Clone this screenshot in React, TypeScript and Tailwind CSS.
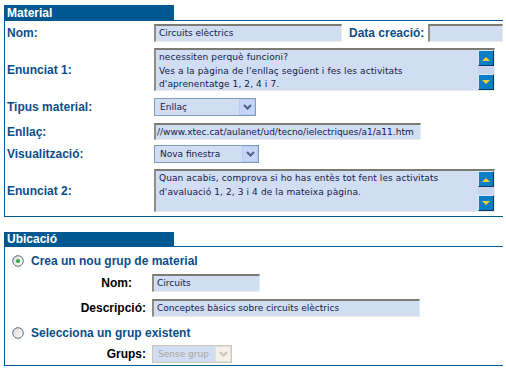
import React from "react";

const LBL = "font-['Liberation_Sans',Arial,sans-serif] font-bold text-[12px] text-[#0b4e8a] whitespace-nowrap";
const LBLK = "font-['Liberation_Sans',Arial,sans-serif] font-bold text-[12px] text-black whitespace-nowrap";
const TXT = "font-['DejaVu_Sans',Verdana,sans-serif] text-[9px] text-[#13204a] whitespace-nowrap overflow-hidden";
const INSET =
  "bg-[#d1ddf3] border-t-2 border-l-2 border-r border-b border-t-[#7b7b73] border-l-[#8e8e86] border-r-[#ecebe4] border-b-[#ecebe4] shrink-0";

function Chevron({ color }: { color: string }) {
  return (
    <svg width="9" height="6" viewBox="0 0 9 6">
      <polyline points="1,1 4.5,4.5 8,1" fill="none" stroke={color} strokeWidth="2" />
    </svg>
  );
}

function SelectBox({ text, wClass, disabled }: { text: string; wClass: string; disabled?: boolean }) {
  return (
    <div
      className={`${wClass} h-[18px] shrink-0 flex border ${
        disabled ? "border-[#c9c7ba]" : "border-[#7f9db9]"
      } bg-[#d1ddf3]`}
    >
      <div
        className={`flex-1 pl-[5px] leading-[16px] ${TXT} ${disabled ? "!text-[#aca899]" : ""}`}
      >
        {text}
      </div>
      <div
        className={`w-[16px] h-[16px] flex items-center justify-center border ${
          disabled ? "bg-[#f2f1ea] border-[#e4e3da]" : "bg-[#c6d5f7] border-[#b9cbf3]"
        }`}
      >
        <Chevron color={disabled ? "#c9c7ba" : "#4d6185"} />
      </div>
    </div>
  );
}

function ScrollBtn({ up }: { up?: boolean }) {
  return (
    <div className="w-[16px] h-[16px] bg-[#0a7ec6] border border-t-[#d8e8f5] border-l-[#d8e8f5] border-r-[#0b3a66] border-b-[#0b3a66] flex items-center justify-center">
      <svg width="8" height="5" viewBox="0 0 8 5">
        {up ? (
          <polygon points="0,5 4,1 8,5" fill="#ffcc33" />
        ) : (
          <polygon points="0,0 8,0 4,4" fill="#ffcc33" />
        )}
      </svg>
    </div>
  );
}

function TextArea({ lines }: { lines: string[] }) {
  return (
    <div className={`w-[341px] h-[43px] flex ${INSET}`}>
      <div className={`flex-1 pl-[3px] pt-[1px] leading-[13.5px] tracking-[0.1px] ${TXT}`}>
        {lines.map((l, i) => (
          <div key={i}>{l}</div>
        ))}
      </div>
      <div className="w-[16px] flex flex-col justify-between bg-[#c6d4ec]">
        <ScrollBtn up />
        <ScrollBtn />
      </div>
    </div>
  );
}

function Radio({ checked }: { checked?: boolean }) {
  return (
    <svg width="12" height="12" viewBox="0 0 12 12" className="shrink-0">
      <defs>
        <linearGradient id={checked ? "rg1" : "rg2"} x1="0" y1="0" x2="1" y2="1">
          <stop offset="0" stopColor="#d8d8d2" />
          <stop offset="1" stopColor="#ffffff" />
        </linearGradient>
      </defs>
      <circle cx="6" cy="6" r="5.3" fill={`url(#${checked ? "rg1" : "rg2"})`} stroke="#56708f" strokeWidth="1" />
      {checked && <circle cx="6" cy="6" r="2" fill="#2ea84a" />}
    </svg>
  );
}

function Header({ title, hClass }: { title: string; hClass: string }) {
  return (
    <div
      className={`w-[170px] ${hClass} bg-[#005891] text-white pl-[3px] font-['Liberation_Sans',Arial,sans-serif] font-bold text-[12px] flex items-center`}
    >
      {title}
    </div>
  );
}

function Row({ label, cls, children }: { label: string; cls: string; children: React.ReactNode }) {
  return (
    <div className={`flex items-center ${cls}`}>
      <div className={`w-[149px] shrink-0 pl-[2px] ${LBL}`}>{label}</div>
      {children}
    </div>
  );
}

function SubRow({ label, cls, labelPad, children }: { label: string; cls: string; labelPad?: string; children: React.ReactNode }) {
  return (
    <div className={`flex items-center ${cls}`}>
      <div className={`w-[141px] shrink-0 text-right ${labelPad ?? ""} ${LBLK}`}>{label}</div>
      <div className="ml-[6px]">{children}</div>
    </div>
  );
}

export default function App() {
  return (
    <div className="w-[506px] h-[374px] bg-white pt-[5px] pl-[4px] pr-[3px] overflow-hidden">
      {/* Material */}
      <Header title="Material" hClass="h-[15px]" />
      <div className="border-t border-l border-b border-[#005891] pt-[3px] pb-[4px]">
        <Row label="Nom:" cls="h-[18px]">
          <div className={`w-[188px] h-[18px] pl-[3px] leading-[15px] ${INSET} ${TXT}`}>Circuits elèctrics</div>
          <div className={`ml-[7px] shrink-0 ${LBL}`}>Data creació:</div>
          <div className={`ml-[4px] w-[75px] h-[18px] ${INSET}`}></div>
        </Row>
        <Row label="Enunciat 1:" cls="mt-[6px] h-[43px]">
          <TextArea
            lines={[
              "necessiten perquè funcioni?",
              "Ves a la pàgina de l'enllaç següent i fes les activitats",
              "d'aprenentatge 1, 2, 4 i 7.",
            ]}
          />
        </Row>
        <Row label="Tipus material:" cls="mt-[7px] h-[18px]">
          <SelectBox text="Enllaç" wClass="w-[102px]" />
        </Row>
        <Row label="Enllaç:" cls="mt-[7px] h-[17px]">
          <div className={`w-[267px] h-[17px] pl-[1px] leading-[14px] ${INSET} ${TXT}`}>
            //www.xtec.cat/aulanet/ud/tecno/ielectriques/a1/a11.htm
          </div>
        </Row>
        <Row label="Visualització:" cls="mt-[5px] h-[18px]">
          <SelectBox text="Nova finestra" wClass="w-[105px]" />
        </Row>
        <Row label="Enunciat 2:" cls="mt-[6px] h-[43px]">
          <TextArea
            lines={[
              "Quan acabis, comprova si ho has entès tot fent les activitats",
              "d'avaluació 1, 2, 3 i 4 de la mateixa pàgina.",
            ]}
          />
        </Row>
      </div>

      {/* Ubicació */}
      <div className="mt-[15px]">
        <Header title="Ubicació" hClass="h-[14px]" />
        <div className="border-t border-l border-b border-[#005891] pt-[6px] pb-[2px]">
          <div className="flex items-center h-[16px] pl-[7px]">
            <Radio checked />
            <div className={`ml-[7px] ${LBL} text-[12.3px]`}>Crea un nou grup de material</div>
          </div>
          <SubRow label="Nom:" cls="mt-[5px] h-[18px]" labelPad="pr-[14px]">
            <div className={`w-[108px] h-[18px] pl-[3px] leading-[15px] ${INSET} ${TXT}`}>Circuits</div>
          </SubRow>
          <SubRow label="Descripció:" cls="mt-[7px] h-[18px]">
            <div className={`w-[268px] h-[18px] pl-[3px] leading-[15px] ${INSET} ${TXT}`}>
              Conceptes bàsics sobre circuits elèctrics
            </div>
          </SubRow>
          <div className="flex items-center h-[16px] pl-[7px] mt-[8px]">
            <Radio />
            <div className={`ml-[7px] ${LBL} text-[12.3px]`}>Selecciona un grup existent</div>
          </div>
          <SubRow label="Grups:" cls="mt-[4px] h-[18px]">
            <SelectBox text="Sense grup" wClass="w-[80px]" disabled />
          </SubRow>
        </div>
      </div>
    </div>
  );
}
